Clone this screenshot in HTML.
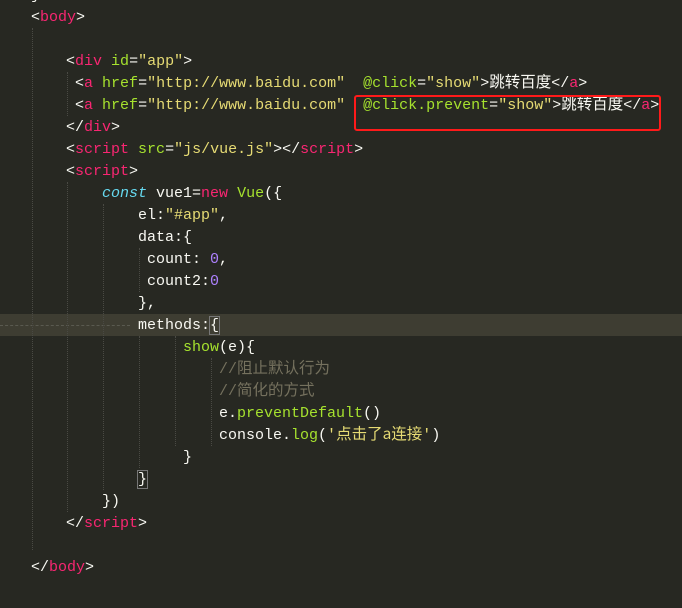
<!DOCTYPE html>
<html><head><meta charset="utf-8"><style>
body{margin:0;width:682px;height:608px;background:#272822;overflow:hidden;position:relative;font-family:"Liberation Mono","Noto Sans CJK SC",monospace;font-size:15px;color:#f8f8f2}
.l{position:absolute;height:22px;line-height:22px;white-space:pre;padding-top:1px}
.t{color:#f92672}.a{color:#a6e22e}.s{color:#e6db74}.k{color:#66d9ef;font-style:italic}.n{color:#ae81ff}.c{color:#75715e}.p{color:#f8f8f2}
.z{font-family:"Noto Sans CJK SC",sans-serif;font-size:15.5px;line-height:10px;display:inline-block;vertical-align:baseline}
.g{position:absolute;width:0;border-left:1px dotted #4a4a44}
</style></head><body>
<div style="position:absolute;left:0;top:314px;width:682px;height:22px;background:#3e3d32"></div>
<div style="position:absolute;left:0;top:325px;width:130px;border-top:1px dashed #5a5a50"></div>
<div class="g" style="left:32px;top:28px;height:522px"></div>
<div class="g" style="left:67px;top:72px;height:44px"></div>
<div class="g" style="left:67px;top:182px;height:330px"></div>
<div class="g" style="left:103px;top:204px;height:286px"></div>
<div class="g" style="left:139px;top:248px;height:44px"></div>
<div class="g" style="left:139px;top:336px;height:132px"></div>
<div class="g" style="left:175px;top:336px;height:110px"></div>
<div class="g" style="left:211px;top:358px;height:88px"></div>

<div class="l" style="left:31px;top:-16px">}</div>
<div class="l" style="left:31px;top:6px"><span class="p">&lt;</span><span class="t">body</span><span class="p">&gt;</span></div>
<div class="l" style="left:66px;top:50px"><span class="p">&lt;</span><span class="t">div</span> <span class="a">id</span>=<span class="s">"app"</span><span class="p">&gt;</span></div>
<div class="l" style="left:75px;top:72px"><span class="p">&lt;</span><span class="t">a</span> <span class="a">href</span>=<span class="s">"http://www.baidu.com"</span>  <span class="a">@click</span>=<span class="s">"show"</span>&gt;<span class="z">跳转百度</span>&lt;/<span class="t">a</span>&gt;</div>
<div class="l" style="left:75px;top:94px"><span class="p">&lt;</span><span class="t">a</span> <span class="a">href</span>=<span class="s">"http://www.baidu.com"</span>  <span class="a">@click.prevent</span>=<span class="s">"show"</span>&gt;<span class="z">跳转百度</span>&lt;/<span class="t">a</span>&gt;</div>
<div class="l" style="left:66px;top:116px"><span class="p">&lt;/</span><span class="t">div</span><span class="p">&gt;</span></div>
<div class="l" style="left:66px;top:138px"><span class="p">&lt;</span><span class="t">script</span> <span class="a">src</span>=<span class="s">"js/vue.js"</span><span class="p">&gt;&lt;/</span><span class="t">script</span><span class="p">&gt;</span></div>
<div class="l" style="left:66px;top:160px"><span class="p">&lt;</span><span class="t">script</span><span class="p">&gt;</span></div>
<div class="l" style="left:102px;top:182px"><span class="k">const</span> vue1=<span class="t">new</span> <span class="a">Vue</span>({</div>
<div class="l" style="left:138px;top:204px">el:<span class="s">"#app"</span>,</div>
<div class="l" style="left:138px;top:226px">data:{</div>
<div class="l" style="left:147px;top:248px">count: <span class="n">0</span>,</div>
<div class="l" style="left:147px;top:270px">count2:<span class="n">0</span></div>
<div class="l" style="left:138px;top:292px">},</div>
<div class="l" style="left:138px;top:314px">methods:<span style="outline:1px solid #777">{</span></div>
<div class="l" style="left:183px;top:336px"><span class="a">show</span>(e){</div>
<div class="l c" style="left:219px;top:358px">//<span class="z">阻止默认行为</span></div>
<div class="l c" style="left:219px;top:380px">//<span class="z">简化的方式</span></div>
<div class="l" style="left:219px;top:402px">e.<span class="a">preventDefault</span>()</div>
<div class="l" style="left:219px;top:424px">console.<span class="a">log</span>(<span class="s">'<span class="z">点击了a连接</span>'</span>)</div>
<div class="l" style="left:183px;top:446px">}</div>
<div class="l" style="left:138px;top:468px"><span style="outline:1px solid #777">}</span></div>
<div class="l" style="left:102px;top:490px">})</div>
<div class="l" style="left:66px;top:512px"><span class="p">&lt;/</span><span class="t">script</span><span class="p">&gt;</span></div>
<div class="l" style="left:31px;top:556px"><span class="p">&lt;/</span><span class="t">body</span><span class="p">&gt;</span></div>

<div style="position:absolute;left:354px;top:95px;width:303px;height:32px;border:2px solid #ff1a1a;border-radius:3px"></div>
</body></html>
